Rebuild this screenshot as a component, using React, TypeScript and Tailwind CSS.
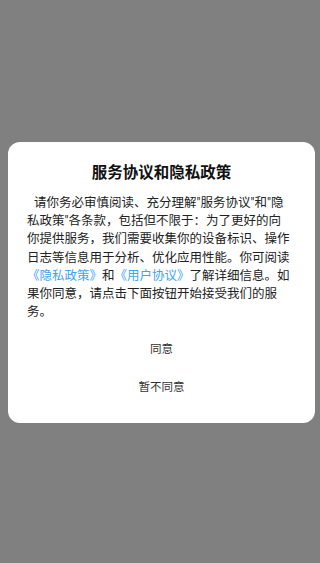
export default function App() {
  return (
    <div
      className="h-[563px] w-[320px] overflow-hidden bg-[#808080] pl-2 pt-[142px]"
      style={{ fontFamily: 'Roboto, "Noto Sans CJK SC", sans-serif' }}
    >
      <div className="w-[307px] rounded-xl bg-white px-[19px] pb-[17px] pt-[20px]">
        <h1 className="text-center text-[15.5px] font-bold leading-[22px] text-[#111]">
          服务协议和隐私政策
        </h1>
        <p className="mt-[10px] w-[265px] text-[12.5px] leading-[18.2px] text-[#222] indent-[7px]">
          请你务必审慎阅读、充分理解"服务协议"和"隐私政策"各条款，包括但不限于：为了更好的向你提供服务，我们需要收集你的设备标识、操作日志等信息用于分析、优化应用性能。你可阅读
          <span className="text-[#3ea4f4]">《隐私政策》</span>和
          <span className="text-[#3ea4f4]">《用户协议》</span>
          了解详细信息。如果你同意，请点击下面按钮开始接受我们的服务。
        </p>
        <div className="mt-[9px] flex flex-col">
          <button className="h-[38px] text-center text-[11.5px] text-[#333]">同意</button>
          <button className="h-[38px] text-center text-[11.5px] text-[#333]">暂不同意</button>
        </div>
      </div>
    </div>
  );
}
